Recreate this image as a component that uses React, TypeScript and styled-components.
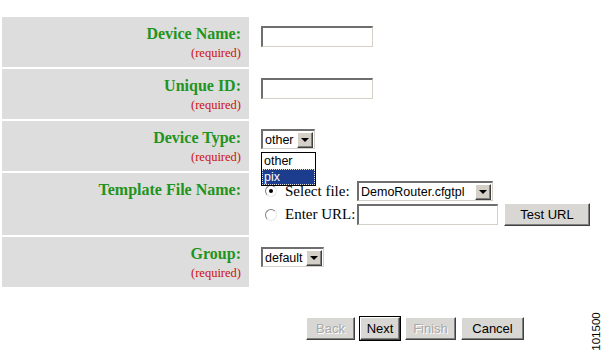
import React from 'react';
import styled, { createGlobalStyle } from 'styled-components';

const GlobalStyle = createGlobalStyle`
  html, body {
    margin: 0;
    padding: 0;
    background: #ffffff;
    font-family: "Liberation Serif", "Times New Roman", serif;
  }
`;

const Page = styled.div`
  position: relative;
  width: 603px;
  height: 357px;
  overflow: hidden;
  padding-top: 17px;
  box-sizing: border-box;
`;

const FormTable = styled.div`
  display: grid;
  grid-template-columns: 247px 1fr;
  column-gap: 2px;
  row-gap: 2px;
  margin-left: 2px;
  width: 598px;
`;

const LabelCell = styled.div<{ $h: number }>`
  height: ${(p) => p.$h}px;
  background: #dddddd;
  text-align: right;
  padding: 8px 8px 0 0;
  box-sizing: border-box;
`;

const Label = styled.div`
  font-weight: bold;
  font-size: 16px;
  line-height: 18px;
  color: #1f9420;
`;

const Required = styled.div`
  font-size: 12.5px;
  line-height: 14px;
  margin-top: 3px;
  color: #cc1111;
`;

const FieldCell = styled.div<{ $top?: number }>`
  position: relative;
  padding: ${(p) => p.$top ?? 9}px 0 0 10px;
  box-sizing: border-box;
`;

const TextBox = styled.div<{ $w: number }>`
  width: ${(p) => p.$w}px;
  height: 21px;
  box-sizing: border-box;
  background: #ffffff;
  border-top: 2px solid #6e6e6e;
  border-left: 2px solid #6e6e6e;
  border-right: 1px solid #d4d0c8;
  border-bottom: 1px solid #d4d0c8;
`;

const SelectBox = styled.div<{ $w: number }>`
  position: relative;
  display: flex;
  align-items: center;
  width: ${(p) => p.$w}px;
  height: 20px;
  box-sizing: border-box;
  background: #ffffff;
  border-top: 2px solid #6e6e6e;
  border-left: 2px solid #6e6e6e;
  border-right: 1px solid #d4d0c8;
  border-bottom: 1px solid #d4d0c8;
  font-family: "Liberation Sans", Arial, sans-serif;
  font-size: 12.5px;
  color: #000000;
`;

const SelectText = styled.span`
  flex: 1;
  padding-left: 2px;
  white-space: nowrap;
  line-height: 16px;
`;

const ArrowButton = styled.span`
  display: flex;
  flex-shrink: 0;
  align-items: center;
  justify-content: center;
  width: 16px;
  height: 16px;
  margin-right: 1px;
  box-sizing: border-box;
  background: #d4d0c8;
  border-top: 1px solid #ffffff;
  border-left: 1px solid #ffffff;
  border-right: 1px solid #404040;
  border-bottom: 1px solid #404040;
  box-shadow: inset -1px -1px #808080;

  &::after {
    content: '';
    width: 0;
    height: 0;
    border-left: 4px solid transparent;
    border-right: 4px solid transparent;
    border-top: 4px solid #000000;
  }
`;

const DropList = styled.div`
  position: absolute;
  left: 10px;
  top: 31px;
  width: 55px;
  box-sizing: border-box;
  border: 1px solid #000000;
  background: #ffffff;
  z-index: 2;
  font-family: "Liberation Sans", Arial, sans-serif;
  font-size: 12.5px;
`;

const DropItem = styled.div<{ $selected?: boolean }>`
  height: 16px;
  line-height: 16px;
  padding-left: 2px;
  box-sizing: border-box;
  background: ${(p) => (p.$selected ? '#1c3c8e' : '#ffffff')};
  color: ${(p) => (p.$selected ? '#ffffff' : '#000000')};
  outline: ${(p) => (p.$selected ? '1px dotted #e0e0e0' : 'none')};
  outline-offset: -1px;
`;

const ChoiceGrid = styled.div`
  display: grid;
  grid-template-columns: 96px auto auto;
  justify-content: start;
  align-items: center;
  row-gap: 2px;
`;

const ChoiceLabel = styled.label`
  display: flex;
  align-items: center;
  font-size: 15px;
  color: #000000;
  padding-left: 4px;
  white-space: nowrap;
`;

const Radio = styled.span<{ $checked?: boolean }>`
  position: relative;
  display: inline-block;
  flex-shrink: 0;
  width: 12px;
  height: 12px;
  margin-right: 8px;
  box-sizing: border-box;
  border-radius: 50%;
  background: #ffffff;
  border: 1px solid;
  border-color: #808080 #e8e8e8 #e8e8e8 #808080;

  &::after {
    content: '';
    display: ${(p) => (p.$checked ? 'block' : 'none')};
    position: absolute;
    left: 3px;
    top: 3px;
    width: 4px;
    height: 4px;
    border-radius: 50%;
    background: #000000;
  }
`;

const WinButton = styled.button<{ $w: number; $default?: boolean }>`
  width: ${(p) => p.$w}px;
  height: 23px;
  padding: 0;
  box-sizing: border-box;
  font-family: "Liberation Sans", Arial, sans-serif;
  font-size: 13px;
  color: #000000;
  background: #d8d7d3;
  border: 1px solid;
  border-color: #ffffff #404040 #404040 #ffffff;
  box-shadow: inset -1px -1px #808080 ${(p) => (p.$default ? ', 0 0 0 1px #000000' : '')};

  &:disabled {
    color: #a8a8a8;
    text-shadow: 1px 1px #ffffff;
  }
`;

const TestButton = styled(WinButton)`
  margin-left: 6px;
`;

const ButtonBar = styled.div`
  display: flex;
  gap: 5px;
  margin-top: 30px;
  padding-left: 306px;
`;

const FigureId = styled.div`
  position: absolute;
  left: 577px;
  top: 325px;
  transform: rotate(-90deg);
  font-family: "Liberation Sans", Arial, sans-serif;
  font-size: 11.5px;
  line-height: 13px;
  color: #000000;
`;

const Select: React.FC<{ value: string; width: number }> = ({ value, width }) => (
  <SelectBox $w={width}>
    <SelectText>{value}</SelectText>
    <ArrowButton />
  </SelectBox>
);

export default function App() {
  return (
    <Page>
      <GlobalStyle />
      <FormTable>
        <LabelCell $h={50}>
          <Label>Device Name:</Label>
          <Required>(required)</Required>
        </LabelCell>
        <FieldCell>
          <TextBox $w={112} />
        </FieldCell>

        <LabelCell $h={50}>
          <Label>Unique ID:</Label>
          <Required>(required)</Required>
        </LabelCell>
        <FieldCell>
          <TextBox $w={112} />
        </FieldCell>

        <LabelCell $h={50}>
          <Label>Device Type:</Label>
          <Required>(required)</Required>
        </LabelCell>
        <FieldCell $top={8}>
          <Select value="other" width={54} />
          <DropList>
            <DropItem>other</DropItem>
            <DropItem $selected>pix</DropItem>
          </DropList>
        </FieldCell>

        <LabelCell $h={62}>
          <Label>Template File Name:</Label>
        </LabelCell>
        <FieldCell $top={8}>
          <ChoiceGrid>
            <ChoiceLabel>
              <Radio $checked />
              Select file:
            </ChoiceLabel>
            <Select value="DemoRouter.cfgtpl" width={136} />
            <span />
            <ChoiceLabel>
              <Radio />
              Enter URL:
            </ChoiceLabel>
            <TextBox $w={141} />
            <TestButton $w={86}>Test URL</TestButton>
          </ChoiceGrid>
        </FieldCell>

        <LabelCell $h={50}>
          <Label>Group:</Label>
          <Required>(required)</Required>
        </LabelCell>
        <FieldCell $top={10}>
          <Select value="default" width={63} />
        </FieldCell>
      </FormTable>

      <ButtonBar>
        <WinButton $w={49} disabled>Back</WinButton>
        <WinButton $w={40} $default>Next</WinButton>
        <WinButton $w={51} disabled>Finish</WinButton>
        <WinButton $w={63}>Cancel</WinButton>
      </ButtonBar>

      <FigureId>101500</FigureId>
    </Page>
  );
}
